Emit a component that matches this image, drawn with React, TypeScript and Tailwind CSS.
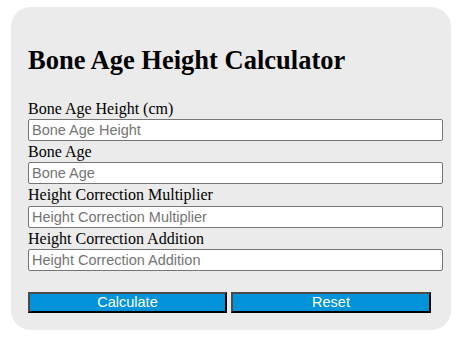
import React from "react";

const serif = { fontFamily: '"Liberation Serif", "Times New Roman", serif' };

function Field({ label, placeholder }: { label: string; placeholder: string }) {
  return (
    <div className="flex flex-col">
      <label className="block text-[16px] leading-[21.4px] text-black" style={serif}>
        {label}
      </label>
      <input
        type="text"
        placeholder={placeholder}
        className="h-[22px] w-full rounded-[2px] border border-[#767676] bg-white px-[3px] text-[14.5px] text-black outline-none placeholder:text-[#757575] font-['Liberation_Sans',Arial,sans-serif]"
      />
    </div>
  );
}

export default function App() {
  return (
    <div className="min-h-[353px] w-[467px] bg-white pt-[7px] pl-[11px]">
      <div className="w-[440px] h-[323px] rounded-[20px] bg-[#ebebeb] pl-[17px] pr-[8px] pt-[37px]">
        <h2 className="text-[26.5px] font-bold leading-[32px] text-black" style={serif}>
          Bone Age Height Calculator
        </h2>
        <div className="mt-[21.5px] flex flex-col">
          <Field label="Bone Age Height (cm)" placeholder="Bone Age Height" />
          <Field label="Bone Age" placeholder="Bone Age" />
          <Field label="Height Correction Multiplier" placeholder="Height Correction Multiplier" />
          <Field label="Height Correction Addition" placeholder="Height Correction Addition" />
        </div>
        <div className="mt-[21px] flex gap-[4px]">
          <button className="h-[21px] w-[199px] border-2 border-t-[#4a4a4a] border-l-[#4a4a4a] border-r-black border-b-black bg-[#0093d9] text-[14.5px] leading-none text-white font-['Liberation_Sans',Arial,sans-serif]">
            Calculate
          </button>
          <button className="h-[21px] w-[200px] border-2 border-t-[#4a4a4a] border-l-[#4a4a4a] border-r-black border-b-black bg-[#0093d9] text-[14.5px] leading-none text-white font-['Liberation_Sans',Arial,sans-serif]">
            Reset
          </button>
        </div>
      </div>
    </div>
  );
}
